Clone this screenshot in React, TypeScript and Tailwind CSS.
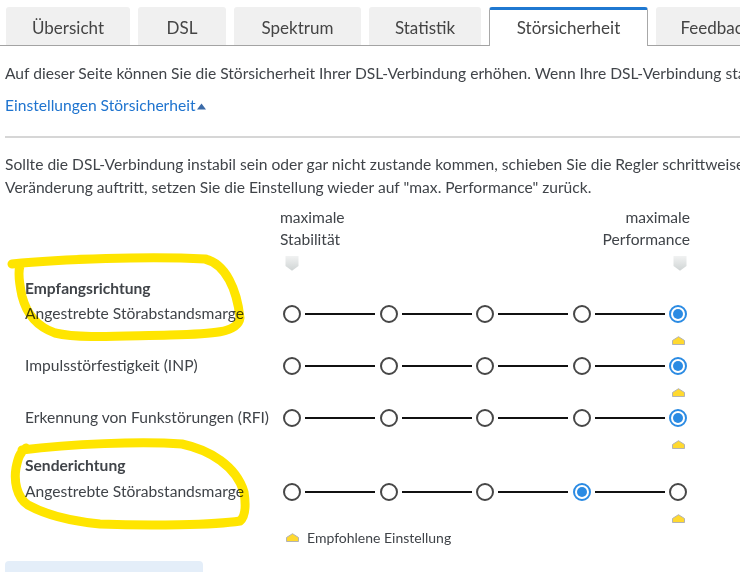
import React from 'react';

const tabs = [
  { name: 'Übersicht', w: 'w-[124px]' },
  { name: 'DSL', w: 'w-[88px]' },
  { name: 'Spektrum', w: 'w-[127px]' },
  { name: 'Statistik', w: 'w-[112px]' },
  { name: 'Störsicherheit', w: 'w-[159px]', active: true },
  { name: 'Feedback', w: 'w-[120px]' },
];

const Pin = () => (
  <svg width="14" height="15" viewBox="0 0 14 15">
    <defs>
      <linearGradient id="pin" x1="0" y1="0" x2="0" y2="1">
        <stop offset="0" stopColor="#f1f2f2" />
        <stop offset="1" stopColor="#cfd4d4" />
      </linearGradient>
    </defs>
    <path d="M0.5 0 H13.5 V10 L7 14.8 L0.5 10 Z" fill="url(#pin)" />
  </svg>
);

const Marker = () => (
  <svg width="13" height="9" viewBox="0 0 13 9">
    <path d="M0.5 8.5 V4.5 L6.5 0.7 L12.5 4.5 V8.5 Z" fill="#ffd92f" stroke="#b3b3b3" strokeWidth="1" />
  </svg>
);

const Radio = ({ on }: { on: boolean }) =>
  on ? (
    <div className="w-[18px] h-[18px] rounded-full border-2 border-[#2b8be3] flex items-center justify-center">
      <div className="w-[10px] h-[10px] rounded-full bg-[#2b8be3]" />
    </div>
  ) : (
    <div className="w-[18px] h-[18px] rounded-full border-2 border-[#474747]" />
  );

const Slider = ({ selected }: { selected: number }) => (
  <div className="flex items-center">
    {[0, 1, 2, 3, 4].map((i) => (
      <React.Fragment key={i}>
        <Radio on={i === selected} />
        {i < 4 && (
          <div className="w-[78.5px] flex justify-center">
            <div className="w-[70px] h-[1.5px] bg-[#111]" />
          </div>
        )}
      </React.Fragment>
    ))}
  </div>
);

const SliderRow = ({ label, selected }: { label: string; selected: number }) => (
  <>
    <div className="flex h-[26px] items-center">
      <div className="w-[283px] pl-[25px] whitespace-nowrap">{label}</div>
      <Slider selected={selected} />
    </div>
    <div className="flex h-[26px] items-center">
      <div className="ml-[672px] flex">
        <Marker />
      </div>
    </div>
  </>
);

export default function App() {
  return (
    <div className="relative w-[740px] h-[572px] overflow-hidden bg-white text-[15.6px] text-[#404449] font-[family-name:Lato,sans-serif]">
      <div className="w-[1000px]">
        {/* Reiter */}
        <div className="flex gap-2 pl-[6px] pt-[7px] border-b border-[#a3a3a3]">
          {tabs.map((t) =>
            t.active ? (
              <div
                key={t.name}
                className={`${t.w} h-[39px] -mb-px bg-white border-t-[3px] border-t-[#1f78d1] border-x border-x-[#a8a8a8] rounded-t-[3px] flex items-center justify-center text-[17px] text-[#444]`}
              >
                {t.name}
              </div>
            ) : (
              <div
                key={t.name}
                className={`${t.w} h-[38px] pt-[3px] bg-[#f0f0f0] rounded-t-[3px] flex items-center justify-center text-[17px] text-[#444]`}
              >
                {t.name}
              </div>
            )
          )}
        </div>

        <div className="px-[5px]">
          <p className="mt-[16px] leading-[22px] whitespace-nowrap">
            Auf dieser Seite können Sie die Störsicherheit Ihrer DSL-Verbindung erhöhen. Wenn Ihre DSL-Verbindung stabil läuft, sind keine Änderungen nötig.
          </p>
          <div className="mt-[10px] leading-[22px] text-[#1f74cf] flex items-center">
            Einstellungen Störsicherheit
            <svg width="9" height="7" viewBox="0 0 9 7" className="ml-[1px] mt-[3px]">
              <path d="M0 6.5 L4.5 0.5 L9 6.5 Z" fill="#3b6ba8" />
            </svg>
          </div>
          <div className="mt-[20px] h-[2px] bg-[#d6d6d6]" />
          <p className="mt-[15px] leading-[23px] whitespace-nowrap">
            Sollte die DSL-Verbindung instabil sein oder gar nicht zustande kommen, schieben Sie die Regler schrittweise nach links. Wenn keine
            <br />
            Veränderung auftritt, setzen Sie die Einstellung wieder auf "max. Performance" zurück.
          </p>
        </div>

        {/* Regler */}
        <div className="mt-[7px]">
          <div className="ml-[280px] w-[410px] flex justify-between leading-[22px]">
            <div>
              maximale
              <br />
              Stabilität
            </div>
            <div className="text-right">
              maximale
              <br />
              Performance
            </div>
          </div>
          <div className="h-[29px] pt-[6px] ml-[285px] w-[402px] flex justify-between items-start">
            <Pin />
            <Pin />
          </div>

          <div className="h-[22px] pl-[25px] font-bold leading-[18px]">Empfangsrichtung</div>
          <SliderRow label="Angestrebte Störabstandsmarge" selected={4} />
          <SliderRow label="Impulsstörfestigkeit (INP)" selected={4} />
          <SliderRow label="Erkennung von Funkstörungen (RFI)" selected={4} />
          <div className="h-[22px] pl-[25px] font-bold leading-[16px]">Senderichtung</div>
          <SliderRow label="Angestrebte Störabstandsmarge" selected={3} />

          <div className="flex items-center gap-2 ml-[286px] h-[16px] -mt-[2px] text-[14px]">
            <Marker />
            <span>Empfohlene Einstellung</span>
          </div>
          <div className="mt-[16px] ml-[5px] w-[198px] h-[30px] bg-[#e4eef9] rounded-t-[4px]" />
        </div>
      </div>

      {/* Markierungen */}
      <svg
        className="absolute inset-0 pointer-events-none mix-blend-multiply"
        width="740"
        height="572"
        viewBox="0 0 740 572"
      >
        <g fill="none" stroke="#ffe500" strokeWidth="9" strokeLinecap="round" strokeLinejoin="round">
          <path d="M12 264 C60 259 150 256 205 259 C226 264 237 290 240 318 C238 333 212 334 170 335 C120 336 80 339 55 333 C35 326 26 312 22 296 C19 282 18 272 20 266" />
          <path d="M22 450 C70 444 140 441 182 444 C210 450 236 466 244 492 C246 505 246 516 240 521 C215 525 150 526 100 524 C70 521 48 516 28 505 C16 497 14 480 16 468 C18 458 20 452 26 448" />
        </g>
      </svg>
    </div>
  );
}
